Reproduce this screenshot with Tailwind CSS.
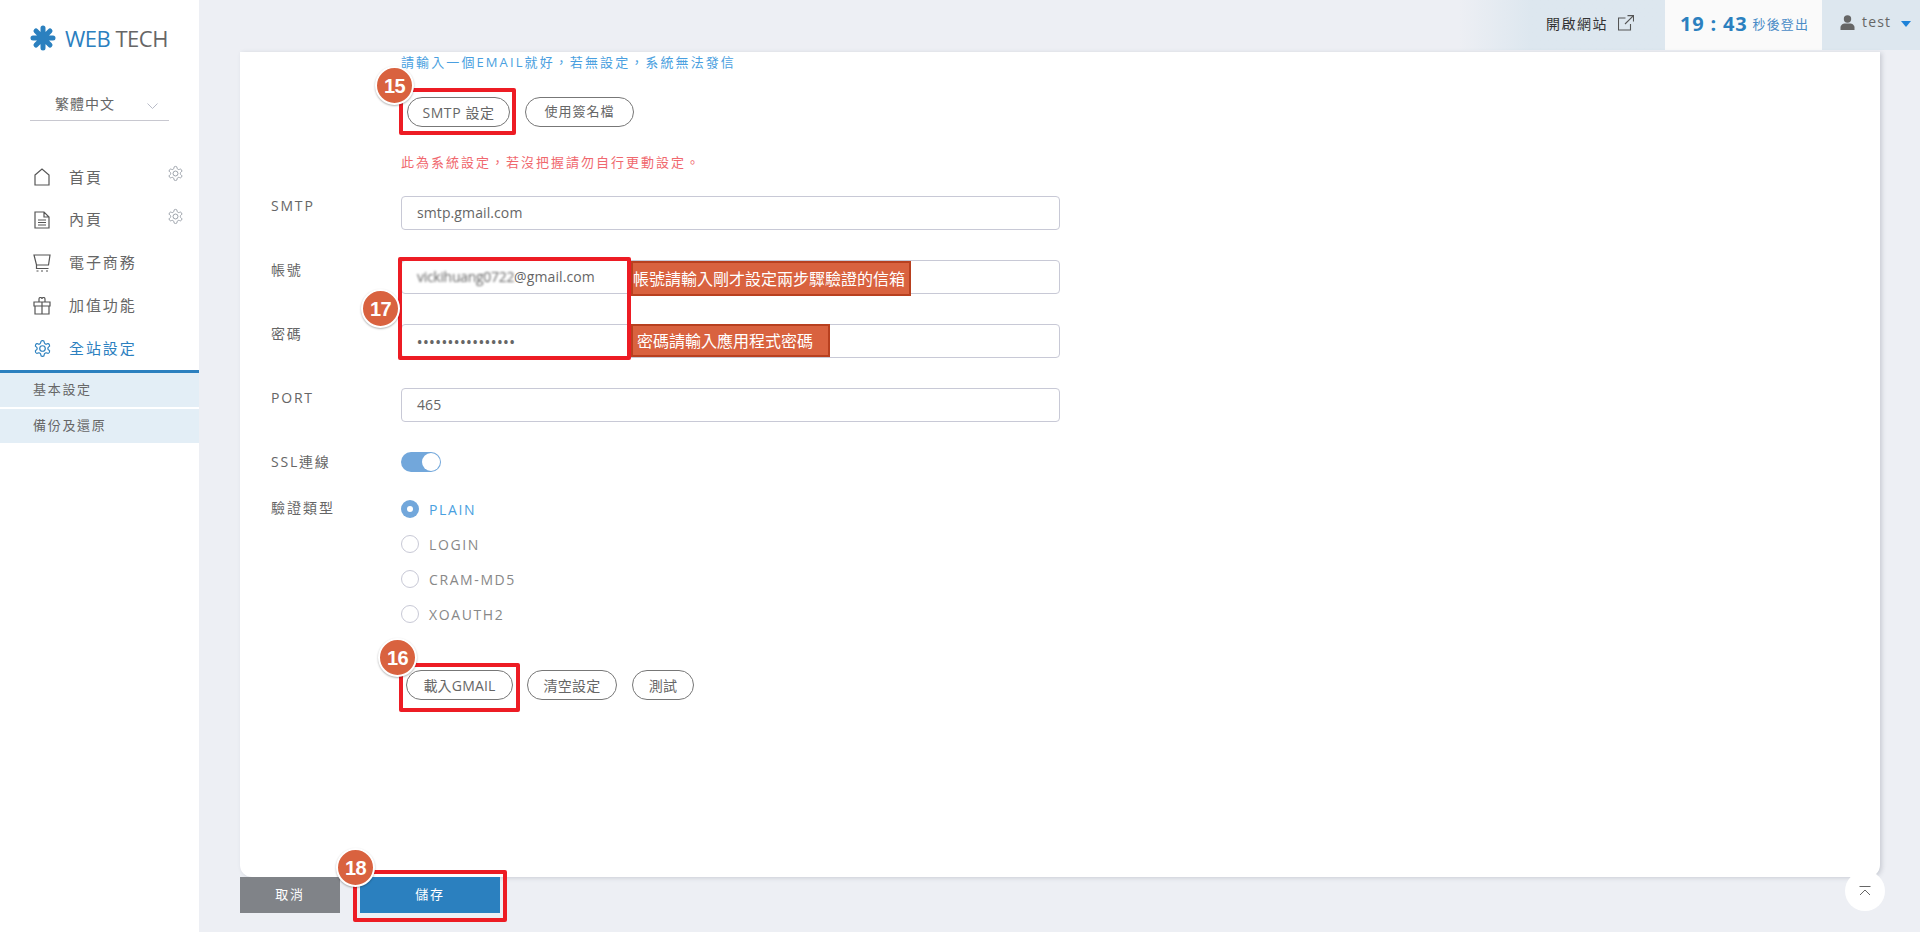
<!DOCTYPE html>
<html lang="zh-Hant">
<head>
<meta charset="utf-8">
<title>WEB TECH</title>
<script src="https://cdn.jsdelivr.net/npm/@tailwindcss/browser@4"></script>
</head>
<body class="relative h-[932px] w-[1920px] overflow-hidden bg-[#edeff4] font-['Open_Sans','Noto_Sans_CJK_TC',sans-serif] text-[14px] text-[#666]">
<div class="flex h-full">
  <!-- sidebar -->
  <aside class="flex w-[199px] shrink-0 flex-col bg-white">
    <div class="ml-[30px] mt-[26px] flex h-[24px] items-center gap-[9px]">
      <svg class="h-[26px] w-[26px]" viewBox="0 0 26 26" stroke="#2b80bf" stroke-width="5" stroke-linecap="round"><path d="M13 3v20M3 13h20M6 6l14 14M20 6L6 20"/></svg>
      <div class="whitespace-nowrap text-[22px] leading-none tracking-[-0.5px]"><span class="text-[#2b80bf]">WEB</span> <span class="text-[#666]">TECH</span></div>
    </div>
    <div class="ml-[30px] mt-[41px] flex h-[30px] w-[139px] items-center border-b border-[#c8c8d0] pb-[4px]">
      <span class="ml-[25px] text-[14px] tracking-[1px]">繁體中文</span>
      <svg class="ml-[32px] mt-[4px] h-[6px] w-[11px]" viewBox="0 0 11 6" fill="none" stroke="#b9bcc8"><path d="M.5.5l5 5 5-5"/></svg>
    </div>
    <nav class="mt-[35px] flex flex-col text-[15px] tracking-[1.9px]">
      <div class="flex h-[42px] items-center pl-[33px]">
        <svg class="h-[18px] w-[18px]" viewBox="0 0 18 18" fill="none" stroke="#555" stroke-width="1.2"><path d="M2 7l7-6 7 6v10H2z"/></svg>
        <span class="ml-[18px]">首頁</span>
        <svg class="ml-[64px] mt-[-7px] h-[17px] w-[17px]" viewBox="0 0 24 24" fill="none" stroke="#9aa0a8" stroke-width="1.4"><path d="M12.2 2h-.4a2 2 0 0 0-2 2v.2a2 2 0 0 1-1 1.7l-.4.3a2 2 0 0 1-2 0l-.2-.1a2 2 0 0 0-2.700.7l-.2.4a2 2 0 0 0 .7 2.700l.2.1a2 2 0 0 1 1 1.700v.5a2 2 0 0 1-1 1.700l-.2.1a2 2 0 0 0-.7 2.700l.2.4a2 2 0 0 0 2.700.7l.2-.1a2 2 0 0 1 2 0l.4.3a2 2 0 0 1 1 1.700v.2a2 2 0 0 0 2 2h.4a2 2 0 0 0 2-2v-.2a2 2 0 0 1 1-1.700l.4-.3a2 2 0 0 1 2 0l.2.1a2 2 0 0 0 2.700-.7l.2-.4a2 2 0 0 0-.7-2.700l-.2-.1a2 2 0 0 1-1-1.700v-.5a2 2 0 0 1 1-1.700l.2-.1a2 2 0 0 0 .7-2.700l-.2-.4a2 2 0 0 0-2.700-.7l-.2.1a2 2 0 0 1-2 0l-.4-.3a2 2 0 0 1-1-1.700V4a2 2 0 0 0-2-2z"/><circle cx="12" cy="12" r="3.500"/></svg>
      </div>
      <div class="flex h-[43px] items-center pl-[33px]">
        <svg class="h-[18px] w-[18px]" viewBox="0 0 18 18" fill="none" stroke="#555" stroke-width="1.2"><path d="M2 1h9l5 5v11H2zM11 1v5h5M5 9h8M5 11.500h8M5 14h8"/></svg>
        <span class="ml-[18px]">內頁</span>
        <svg class="ml-[64px] mt-[-7px] h-[17px] w-[17px]" viewBox="0 0 24 24" fill="none" stroke="#9aa0a8" stroke-width="1.4"><path d="M12.2 2h-.4a2 2 0 0 0-2 2v.2a2 2 0 0 1-1 1.7l-.4.3a2 2 0 0 1-2 0l-.2-.1a2 2 0 0 0-2.700.7l-.2.4a2 2 0 0 0 .7 2.700l.2.1a2 2 0 0 1 1 1.700v.5a2 2 0 0 1-1 1.700l-.2.1a2 2 0 0 0-.7 2.700l.2.4a2 2 0 0 0 2.700.7l.2-.1a2 2 0 0 1 2 0l.4.3a2 2 0 0 1 1 1.700v.2a2 2 0 0 0 2 2h.4a2 2 0 0 0 2-2v-.2a2 2 0 0 1 1-1.700l.4-.3a2 2 0 0 1 2 0l.2.1a2 2 0 0 0 2.700-.7l.2-.4a2 2 0 0 0-.7-2.700l-.2-.1a2 2 0 0 1-1-1.700v-.5a2 2 0 0 1 1-1.700l.2-.1a2 2 0 0 0 .7-2.700l-.2-.4a2 2 0 0 0-2.700-.7l-.2.1a2 2 0 0 1-2 0l-.4-.3a2 2 0 0 1-1-1.700V4a2 2 0 0 0-2-2z"/><circle cx="12" cy="12" r="3.500"/></svg>
      </div>
      <div class="flex h-[43px] items-center pl-[33px]">
        <svg class="h-[18px] w-[18px]" viewBox="0 0 18 18" fill="none" stroke="#555" stroke-width="1.2"><path d="M1 1h16l-1.500 10H3.500zM3.500 11v3.500h12"/><path d="M3.500 17h2M8 17h2M13 17h2"/></svg>
        <span class="ml-[18px]">電子商務</span>
      </div>
      <div class="flex h-[43px] items-center pl-[33px]">
        <svg class="h-[18px] w-[18px]" viewBox="0 0 18 18" fill="none" stroke="#555" stroke-width="1.2"><path d="M1 5h16v4H1zM2 9h14v8H2zM9 5v12M6 5V2a1 1 0 0 1 3 0 1 1 0 0 1 3 0v3"/></svg>
        <span class="ml-[18px]">加值功能</span>
      </div>
      <div class="flex h-[42px] items-center pl-[33px] text-[#2b80bf]">
        <svg class="h-[19px] w-[19px]" viewBox="0 0 24 24" fill="none" stroke="#2b80bf" stroke-width="1.500"><path d="M12.2 2h-.4a2 2 0 0 0-2 2v.2a2 2 0 0 1-1 1.7l-.4.3a2 2 0 0 1-2 0l-.2-.1a2 2 0 0 0-2.700.7l-.2.4a2 2 0 0 0 .7 2.700l.2.1a2 2 0 0 1 1 1.700v.5a2 2 0 0 1-1 1.700l-.2.1a2 2 0 0 0-.7 2.700l.2.4a2 2 0 0 0 2.700.7l.2-.1a2 2 0 0 1 2 0l.4.3a2 2 0 0 1 1 1.700v.2a2 2 0 0 0 2 2h.4a2 2 0 0 0 2-2v-.2a2 2 0 0 1 1-1.700l.4-.3a2 2 0 0 1 2 0l.2.1a2 2 0 0 0 2.700-.7l.2-.4a2 2 0 0 0-.7-2.700l-.2-.1a2 2 0 0 1-1-1.700v-.5a2 2 0 0 1 1-1.700l.2-.1a2 2 0 0 0 .7-2.700l-.2-.4a2 2 0 0 0-2.700-.7l-.2.1a2 2 0 0 1-2 0l-.4-.3a2 2 0 0 1-1-1.700V4a2 2 0 0 0-2-2z"/><circle cx="12" cy="12" r="3.500"/></svg>
        <span class="ml-[17px]">全站設定</span>
      </div>
    </nav>
    <div class="mt-[1px] border-t-[3px] border-[#2b80bf] text-[13px] tracking-[1.700px]">
      <div class="flex h-[34px] items-center bg-[#e3eef6] pl-[33px]">基本設定</div>
      <div class="mt-[2px] flex h-[34px] items-center bg-[#e3eef6] pl-[33px]">備份及還原</div>
    </div>
  </aside>

  <!-- main -->
  <main class="flex min-w-0 flex-1 flex-col">
    <header class="flex h-[50px] shrink-0 justify-end">
      <div class="flex w-[206px] items-center justify-end bg-gradient-to-r from-[#edeff4] to-[#dde7ef] to-35% pb-[4px] pr-[31px] text-[#333]">
        <span class="text-[14px] tracking-[1.500px]">開啟網站</span>
        <svg class="ml-[10px] h-[16px] w-[16px]" viewBox="0 0 16 16" fill="none" stroke="#555" stroke-width="1.100"><path d="M12.500 9v6h-12V3h7M9.500.6h6v6M15.500.6L7 9"/></svg>
      </div>
      <div class="flex w-[157px] items-center bg-[#fafafa] pb-[3px] pl-[15px] text-[#2b80bf]">
        <span class="text-[20px] font-bold leading-none tracking-[0.8px]">19 : 43</span>
        <span class="ml-[5px] mt-[3px] text-[13px] tracking-[1.200px] text-[#4a8cc7]">秒後登出</span>
      </div>
      <div class="flex w-[98px] items-center bg-[#dde7ef] pb-[3px] pl-[18px]">
        <svg class="mt-[-3px] h-[15px] w-[15px]" viewBox="0 0 15 15" fill="#666"><circle cx="7.500" cy="4" r="3.700"/><path d="M.5 15v-2.500C.5 10 3 8.500 5 8.500h5c2 0 4.500 1.500 4.500 4V15z"/></svg>
        <span class="ml-[7px] mt-[-4px] text-[14px] tracking-[1.200px]">test</span>
        <span class="ml-[10px] h-0 w-0 border-x-[5px] border-t-[6px] border-x-transparent border-t-[#1e82d8]"></span>
      </div>
    </header>

    <section class="ml-[41px] mt-[2px] h-[825px] w-[1640px] shrink-0 rounded-b-[12px] bg-white pl-[31px] shadow-[2px_1px_4px_rgba(120,125,140,0.3)]">
      <p class="ml-[130px] mt-[1px] whitespace-nowrap text-[13px] leading-[18px] tracking-[2.100px] text-[#4a9fe0]">請輸入一個EMAIL就好，若無設定，系統無法發信</p>
      <div class="ml-[136px] mt-[26px] flex gap-[15px] text-[14px] tracking-[0.600px]">
        <button class="h-[30px] w-[103px] rounded-full border border-[#777] text-[#666]">SMTP 設定</button>
        <button class="h-[30px] w-[109px] rounded-full border border-[#777] text-[13px] tracking-[1px] text-[#666]">使用簽名檔</button>
      </div>
      <p class="ml-[130px] mt-[26px] whitespace-nowrap text-[13px] leading-[18px] tracking-[2px] text-[#f0686e]">此為系統設定，若沒把握請勿自行更動設定。</p>

      <div class="mt-[25px] flex flex-col gap-[30px]">
        <div class="flex items-start"><label class="w-[130px] leading-[20px] tracking-[1.800px]">SMTP</label><div class="flex h-[34px] w-[659px] items-center rounded-[4px] border border-[#c8c9d6] pb-[2px] pl-[15px] tracking-[0.100px]">smtp.gmail.com</div></div>
        <div class="flex items-start"><label class="w-[130px] leading-[20px] tracking-[1.800px]">帳號</label><div class="flex h-[34px] w-[659px] items-center rounded-[4px] border border-[#c8c9d6] pb-[2px] pl-[15px] tracking-[0.100px]"><span class="tracking-[-0.300px] blur-[1.200px]">vickihuang0722</span>@gmail.com</div></div>
        <div class="flex items-start"><label class="w-[130px] leading-[20px] tracking-[1.800px]">密碼</label><div class="flex h-[34px] w-[659px] items-center rounded-[4px] border border-[#c8c9d6] pl-[15px] text-[14px] font-semibold tracking-[0.900px]">••••••••••••••••</div></div>
        <div class="flex items-start"><label class="w-[130px] leading-[20px] tracking-[1.800px]">PORT</label><div class="flex h-[34px] w-[659px] items-center rounded-[4px] border border-[#c8c9d6] pb-[2px] pl-[15px] tracking-[0.100px]">465</div></div>
      </div>

      <div class="mt-[30px] flex items-center">
        <label class="w-[130px] leading-[20px] tracking-[1.800px]">SSL連線</label>
        <div class="flex h-[20px] w-[40px] items-center justify-end rounded-full bg-[#72a7db] pr-[1px]"><span class="h-[18px] w-[18px] rounded-full bg-white"></span></div>
      </div>

      <div class="mt-[26px] flex items-start">
        <label class="w-[130px] leading-[20px] tracking-[2px]">驗證類型</label>
        <div class="mt-[2px] flex flex-col gap-[17px] tracking-[1.600px] text-[#888]">
          <div class="flex h-[18px] items-center gap-[10px] text-[#4a9fe0]"><span class="flex h-[18px] w-[18px] items-center justify-center rounded-full bg-[#72a7db]"><span class="h-[6px] w-[6px] rounded-full bg-white"></span></span>PLAIN</div>
          <div class="flex h-[18px] items-center gap-[10px]"><span class="h-[18px] w-[18px] rounded-full border border-[#c8c9d6]"></span>LOGIN</div>
          <div class="flex h-[18px] items-center gap-[10px]"><span class="h-[18px] w-[18px] rounded-full border border-[#c8c9d6]"></span>CRAM-MD5</div>
          <div class="flex h-[18px] items-center gap-[10px]"><span class="h-[18px] w-[18px] rounded-full border border-[#c8c9d6]"></span>XOAUTH2</div>
        </div>
      </div>

      <div class="ml-[135px] mt-[47px] flex gap-[14px] text-[14px] tracking-[0.200px]">
        <button class="h-[30px] w-[107px] rounded-full border border-[#777] text-[#666]">載入GMAIL</button>
        <button class="h-[30px] w-[90px] rounded-full border border-[#777] text-[#666]">清空設定</button>
        <button class="ml-[1px] h-[30px] w-[62px] rounded-full border border-[#777] text-[#666]">測試</button>
      </div>
    </section>

    <div class="ml-[41px] flex h-[36px] gap-[20px] text-[13px] tracking-[1.800px] text-white">
      <button class="w-[100px] bg-[#808388]">取消</button>
      <button class="w-[140px] bg-[#2b80bf]">儲存</button>
    </div>
  </main>
</div>

<!-- annotations over the screenshot -->
<div class="absolute left-[399px] top-[88px] h-[47px] w-[117px] rounded-[2px] border-4 border-[#ed1c24]"></div>
<div class="absolute left-[399px] top-[663px] h-[49px] w-[121px] rounded-[2px] border-4 border-[#ed1c24]"></div>
<div class="absolute left-[398px] top-[257px] h-[103px] w-[233px] rounded-[2px] border-4 border-[#ed1c24]"></div>
<div class="absolute left-[353px] top-[870px] h-[52px] w-[154px] rounded-[2px] border-4 border-[#ed1c24]"></div>

<div class="absolute left-[631px] top-[261px] flex h-[35px] w-[280px] items-center whitespace-nowrap border-2 border-[#b8401f] bg-[#d9623f] text-[16px] text-white">帳號請輸入剛才設定兩步驟驗證的信箱</div>
<div class="absolute left-[631px] top-[324px] flex h-[33px] w-[199px] items-center whitespace-nowrap border-2 border-[#b8401f] bg-[#d9623f] pl-[4px] text-[16px] text-white">密碼請輸入應用程式密碼</div>

<div class="absolute left-[375px] top-[66px] flex h-[39px] w-[39px] items-center justify-center rounded-full border-2 border-white bg-[#d9623f] text-[20px] font-bold tracking-[-0.500px] text-white shadow-[0_1px_2px_rgba(0,0,0,0.3)] font-['Liberation_Sans',sans-serif]">15</div>
<div class="absolute left-[378px] top-[638px] flex h-[39px] w-[39px] items-center justify-center rounded-full border-2 border-white bg-[#d9623f] text-[20px] font-bold tracking-[-0.500px] text-white shadow-[0_1px_2px_rgba(0,0,0,0.3)] font-['Liberation_Sans',sans-serif]">16</div>
<div class="absolute left-[361px] top-[289px] flex h-[39px] w-[39px] items-center justify-center rounded-full border-2 border-white bg-[#d9623f] text-[20px] font-bold tracking-[-0.500px] text-white shadow-[0_1px_2px_rgba(0,0,0,0.3)] font-['Liberation_Sans',sans-serif]">17</div>
<div class="absolute left-[336px] top-[848px] flex h-[39px] w-[39px] items-center justify-center rounded-full border-2 border-white bg-[#d9623f] text-[20px] font-bold tracking-[-0.500px] text-white shadow-[0_1px_2px_rgba(0,0,0,0.3)] font-['Liberation_Sans',sans-serif]">18</div>

<button class="absolute left-[1845px] top-[871px] flex h-[40px] w-[40px] items-center justify-center rounded-full bg-white">
  <svg class="h-[10px] w-[12px]" viewBox="0 0 12 10" fill="none" stroke="#666"><path d="M.5.500h11M1 9l5-5 5 5"/></svg>
</button>
</body>
</html>
